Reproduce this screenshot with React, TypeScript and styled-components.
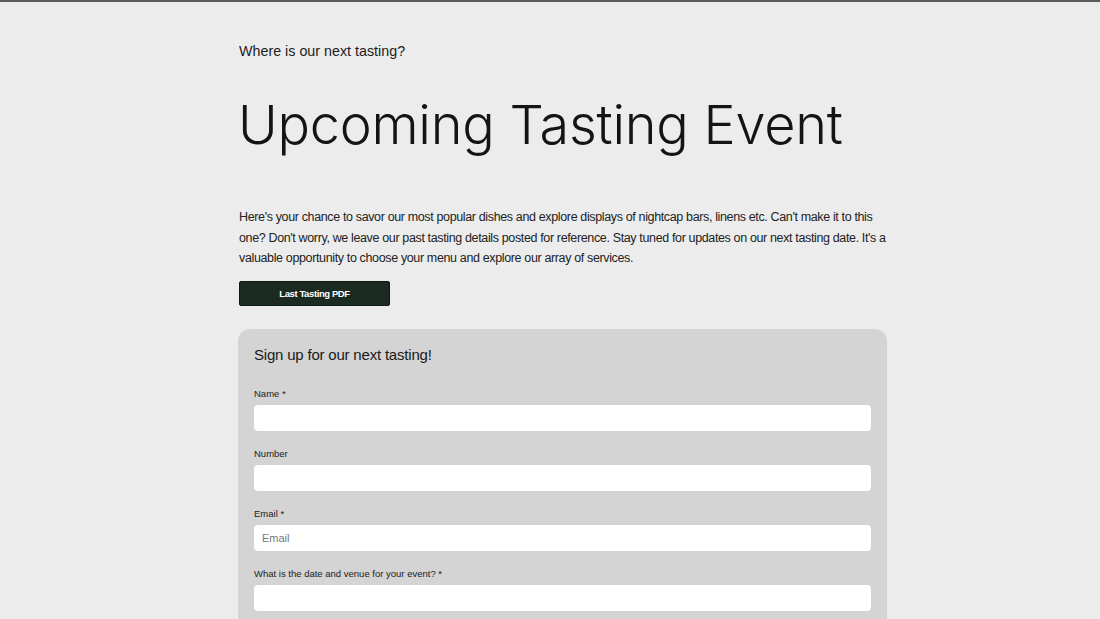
import React from "react";
import styled, { createGlobalStyle } from "styled-components";

const Global = createGlobalStyle`
  html, body { margin: 0; padding: 0; background: #ececec; }
  body { border-top: 2px solid #5a5a5a; font-family: "Liberation Sans", Arial, sans-serif; color: #1a1a1a; }
  * { box-sizing: border-box; }
`;

const Page = styled.main`
  width: 649px;
  margin-left: 238px;
  padding-top: 40px;
  display: flex;
  flex-direction: column;
`;

const Eyebrow = styled.p`
  margin: 0 0 0 1px;
  font-size: 14.3px;
  line-height: 18px;
  color: #1c1c1c;
`;

const Title = styled.h1`
  margin: 30px 0 0 0;
  font-family: Inter, "Liberation Sans", sans-serif;
  font-weight: 300;
  font-size: 54px;
  line-height: 70px;
  letter-spacing: -0.25px;
  color: #141414;
`;

const Intro = styled.p`
  margin: 47px 0 0 1px;
  font-size: 12.5px;
  line-height: 20.5px;
  letter-spacing: -0.36px;
  color: #222;
`;

const PdfButton = styled.button`
  margin: 12px 0 0 1px;
  width: 151px;
  height: 25px;
  border: 1px solid #0e1a14;
  border-radius: 2px;
  background: #1b2b22;
  color: #fff;
  font-family: "Liberation Sans", Arial, sans-serif;
  font-weight: 700;
  font-size: 9.5px;
  letter-spacing: -0.4px;
  cursor: pointer;
`;

const Card = styled.form`
  margin-top: 23px;
  background: #d4d4d4;
  border-radius: 12px;
  padding: 17px 16px 20px 16px;
  display: flex;
  flex-direction: column;
`;

const CardTitle = styled.h2`
  margin: 0 0 24px 0;
  font-weight: 400;
  font-size: 15px;
  line-height: 18px;
  letter-spacing: -0.2px;
  color: #1a1a1a;
`;

const Field = styled.label`
  display: flex;
  flex-direction: column;
  margin-bottom: 17px;
`;

const LabelText = styled.span`
  font-size: 9.5px;
  line-height: 12px;
  color: #222;
  margin-bottom: 5px;
`;

const Input = styled.input`
  height: 26px;
  border: none;
  border-radius: 4px;
  background: #fff;
  padding: 0 8px;
  font-family: "Liberation Sans", Arial, sans-serif;
  font-size: 11px;
  color: #222;
  outline: none;
  &::placeholder { color: #777; }
`;

const fields = [
  { label: "Name *", placeholder: "" },
  { label: "Number", placeholder: "" },
  { label: "Email *", placeholder: "Email" },
  { label: "What is the date and venue for your event? *", placeholder: "" },
];

export default function App() {
  return (
    <>
      <Global />
      <Page>
        <Eyebrow>Where is our next tasting?</Eyebrow>
        <Title>Upcoming Tasting Event</Title>
        <Intro>
          Here's your chance to savor our most popular dishes and explore displays of nightcap bars, linens etc. Can't make it to this one? Don't worry, we leave our past tasting details posted for reference. Stay tuned for updates on our next tasting date. It's a valuable opportunity to choose your menu and explore our array of services.
        </Intro>
        <div>
          <PdfButton type="button">Last Tasting PDF</PdfButton>
        </div>
        <Card onSubmit={(e) => e.preventDefault()}>
          <CardTitle>Sign up for our next tasting!</CardTitle>
          {fields.map((f) => (
            <Field key={f.label}>
              <LabelText>{f.label}</LabelText>
              <Input placeholder={f.placeholder} />
            </Field>
          ))}
        </Card>
      </Page>
    </>
  );
}
